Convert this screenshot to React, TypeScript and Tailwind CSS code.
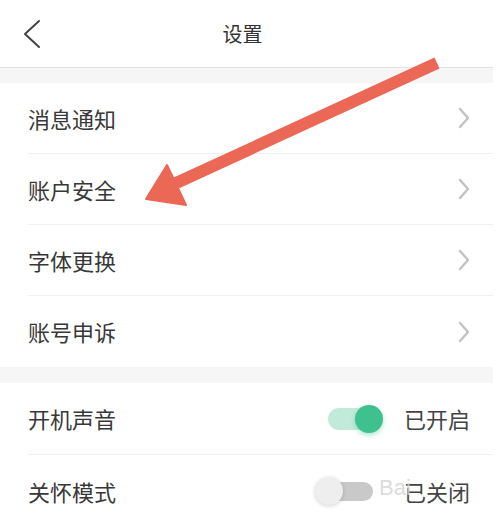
const LINKS = ['消息通知', '账户安全', '字体更换', '账号申诉'];

const FONT = "font-['Noto_Sans_CJK_SC','Noto_Sans',sans-serif]";

function Chevron() {
  return (
    <svg width="14" height="22" viewBox="0 0 14 22" className="shrink-0">
      <polyline points="3,2 11,11 3,20" fill="none" stroke="#c2c2c2" strokeWidth="2.4" strokeLinecap="round" strokeLinejoin="round" />
    </svg>
  );
}

function Toggle({ on }: { on: boolean }) {
  if (on) {
    return (
      <div className="relative w-[62px] h-[30px] flex items-center">
        <div className="w-[54px] h-[22px] rounded-full bg-[#c2eadb]" />
        <div className="absolute left-[27px] top-[1px] w-[28px] h-[28px] rounded-full bg-[#3ec08f] shadow-[0_2px_5px_rgba(62,192,143,0.45)]" />
      </div>
    );
  }
  return (
    <div className="relative w-[62px] h-[30px] flex items-center">
      <div className="ml-[4px] w-[54px] h-[19px] rounded-full bg-[#c9c9c9]" />
      <div className="absolute left-0 top-[1px] w-[28px] h-[28px] rounded-full bg-[#eeeeee] shadow-[0_1px_4px_rgba(0,0,0,0.18)]" />
    </div>
  );
}

export default function App() {
  return (
    <div className={`relative w-[500px] h-[522px] overflow-hidden bg-white ${FONT}`}>
      <div className="w-[493px]">
        {/* Header */}
        <div className="relative h-[68px] flex items-center justify-center border-b border-[#e3e3e3]">
          <svg className="absolute left-[22px] top-[19px]" width="20" height="30" viewBox="0 0 20 30">
            <polyline points="17,2 3,15 17,28" fill="none" stroke="#444" strokeWidth="2" strokeLinecap="round" strokeLinejoin="round" />
          </svg>
          <span className="text-[20px] text-[#333] mr-[8px]">设置</span>
        </div>
        <div className="h-[15px] bg-[#f6f6f6]" />

        {/* Links */}
        <div>
          {LINKS.map((label, i) => (
            <div key={label} className="pl-[28px]">
              <div
                className={`h-[71px] flex items-center justify-between pr-[22px] ${
                  i < LINKS.length - 1 ? 'border-b border-[#f0f0f0]' : ''
                }`}
              >
                <span className="text-[22px] text-[#383838]">{label}</span>
                <Chevron />
              </div>
            </div>
          ))}
        </div>
        <div className="h-[16px] bg-[#f6f6f6]" />

        {/* Switches */}
        <div className="pl-[28px]">
          <div className="h-[72px] flex items-center justify-between pr-[23px] border-b border-[#f0f0f0]">
            <span className="text-[22px] text-[#383838]">开机声音</span>
            <div className="flex items-center gap-[14px]">
              <Toggle on />
              <span className="text-[22px] text-[#444]">已开启</span>
            </div>
          </div>
          <div className="h-[72px] flex items-center justify-between pr-[23px]">
            <span className="text-[22px] text-[#383838]">关怀模式</span>
            <div className="relative flex items-center gap-[27px]">
              <Toggle on={false} />
              <span className="text-[22px] text-[#444]">已关闭</span>
              <span className="absolute left-[64px] top-[2px] text-[22px] leading-none text-[#d4d4d4] opacity-80 pointer-events-none font-['Liberation_Sans',sans-serif]">
                Bai
              </span>
            </div>
          </div>
        </div>
      </div>

      {/* Annotation arrow */}
      <svg className="absolute inset-0 pointer-events-none" width="500" height="522" viewBox="0 0 500 522">
        <line x1="437" y1="63" x2="174" y2="184" stroke="#eb6756" strokeWidth="12" strokeLinecap="butt" />
        <polygon points="146,199 167,165 186,205" fill="#eb6756" strokeLinejoin="round" stroke="#eb6756" strokeWidth="2" />
      </svg>
    </div>
  );
}
